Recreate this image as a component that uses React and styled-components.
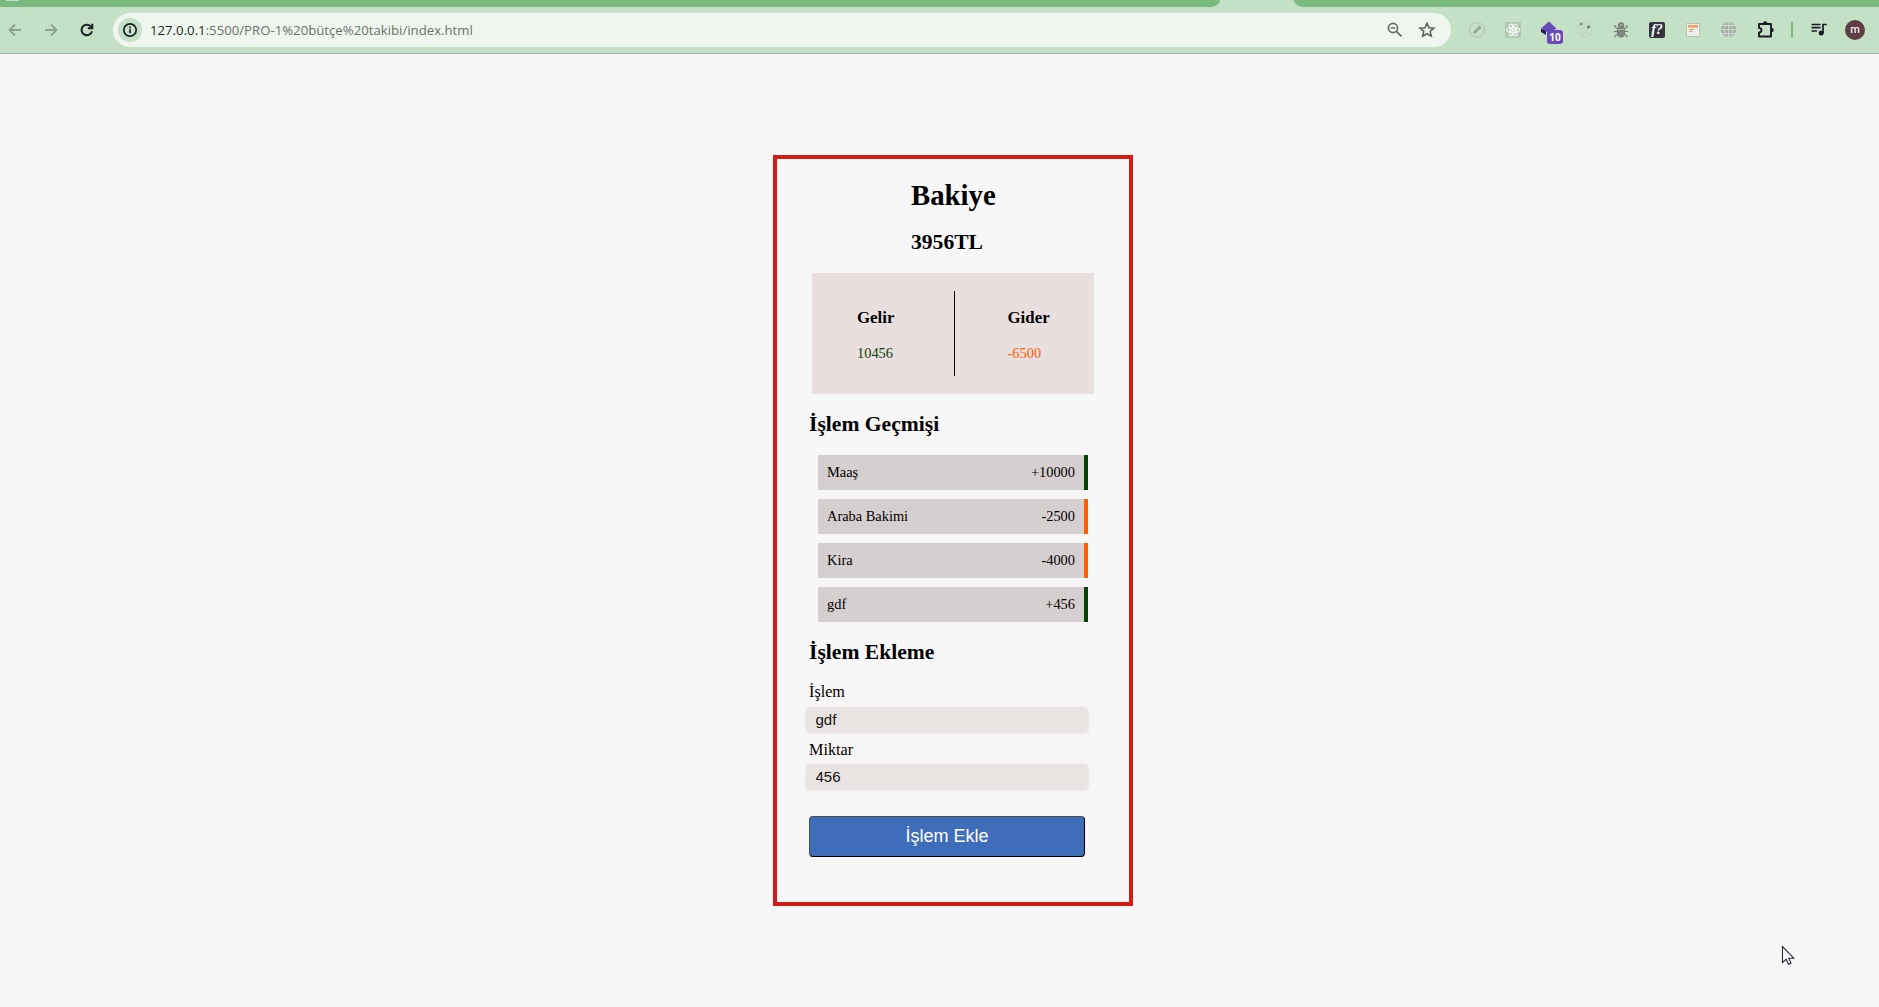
import React, { useState } from 'react';
import styled, { createGlobalStyle } from 'styled-components';

const GlobalStyle = createGlobalStyle`
  * { box-sizing: border-box; }
  body {
    margin: 0;
    background: #f7f7f7;
    color: #000;
    font-family: "Liberation Serif", "Times New Roman", serif;
    font-size: 14.4px;
    overflow: hidden;
  }
  h1, h2, h3, p { margin: 0; }
`;

const Window = styled.div`
  display: flex;
  flex-direction: column;
  height: 1007px;
`;

const TabStrip = styled.div`
  display: flex;
  height: 7px;
  background: #c5e1c5;
`;

const StripSegment = styled.div`
  width: ${(p) => (p.$width ? `${p.$width}px` : 'auto')};
  flex: ${(p) => (p.$width ? 'none' : '1')};
  background: #7aba7e;
  border-radius: ${(p) => (p.$side === 'left' ? '0 0 10px 0 / 0 0 7px 0' : '0 0 0 10px / 0 0 0 7px')};
`;

const HiddenTabIcon = styled.div`
  width: 13px;
  height: 1px;
  margin-left: 6px;
  background: #c9dfca;
`;

const ActiveTab = styled.div`
  width: 74px;
`;

const Toolbar = styled.header`
  display: flex;
  align-items: center;
  height: 47px;
  padding: 0 14px 0 5px;
  background: #c5e1c5;
  border-bottom: 1px solid #9db39e;
`;

const NavButtons = styled.nav`
  display: flex;
  gap: 16px;
  width: 108px;
  align-items: center;
`;

const Svg = styled.svg`
  display: block;
  flex: none;
  width: ${(p) => p.$size || 20}px;
  height: ${(p) => p.$size || 20}px;
`;

const AddressBar = styled.div`
  display: flex;
  align-items: center;
  width: 1338px;
  height: 34px;
  padding: 0 14px 0 5px;
  border-radius: 17px;
  background: #eff6ef;
`;

const SiteInfo = styled.span`
  display: grid;
  place-items: center;
  width: 24px;
  height: 24px;
  border-radius: 50%;
  background: #c5e1c5;
`;

const Url = styled.span`
  flex: 1;
  margin-left: 8px;
  font-family: "Open Sans", "Noto Sans", sans-serif;
  font-size: 13.2px;
  line-height: 20px;
  color: #6b706b;
  white-space: nowrap;
`;

const UrlHost = styled.span`
  color: #1b1f23;
`;

const AddressActions = styled.div`
  display: flex;
  gap: 12px;
`;

const Extensions = styled.div`
  display: flex;
  align-items: center;
  gap: 16px;
  margin-left: 16px;
`;

const BadgeHolder = styled.span`
  position: relative;
`;

const Badge = styled.span`
  position: absolute;
  left: 8px;
  top: 10px;
  width: 16px;
  height: 14px;
  border-radius: 3px;
  background: #674bb8;
  color: #fff;
  font: 700 10px/14px "Open Sans", sans-serif;
  text-align: center;
`;

const FunctionIcon = styled.span`
  display: grid;
  place-items: center;
  width: 16px;
  height: 16px;
  margin: 0 2px;
  border-radius: 2px;
  background: #35333f;
  color: #fff;
  font: italic 700 14px/14px "Liberation Serif", serif;
`;

const Divider = styled.span`
  width: 2px;
  height: 16px;
  background: #7aba7e;
`;

const Profile = styled.span`
  display: grid;
  place-items: center;
  width: 20px;
  height: 20px;
  border-radius: 50%;
  background: #5d3c42;
  color: #f5eeee;
  font: 500 11px/18px Roboto, sans-serif;
`;

const Page = styled.main`
  flex: 1;
  padding-top: 101px;
  padding-left: 773px;
`;

const Card = styled.section`
  display: flex;
  flex-direction: column;
  width: 360px;
  height: 751px;
  padding: 19px 32px 0;
  border: 4px solid #d61b17;
`;

const Balance = styled.div`
  padding-left: 102px;
`;

const Title = styled.h1`
  font-size: 28.8px;
  line-height: 34px;
`;

const Heading = styled.h2`
  font-size: 21.6px;
  line-height: 24px;
  margin-top: ${(p) => p.$top || 0}px;
`;

const Summary = styled.div`
  display: flex;
  justify-content: space-between;
  width: 282px;
  height: 121px;
  margin: 19px 0 0 3px;
  padding: 18px 0;
  background: #e9dfde;
`;

const SummaryColumn = styled.div`
  width: ${(p) => p.$width}px;
  padding: 17px 0 0 ${(p) => p.$indent}px;
  border-right: ${(p) => (p.$divided ? '1px solid #000' : 'none')};
`;

const SummaryLabel = styled.h3`
  font-size: 16.85px;
  line-height: 20px;
`;

const SummaryValue = styled.p`
  margin-top: 16px;
  line-height: 18px;
  color: ${(p) => (p.$negative ? '#f95c06' : '#0a420a')};
`;

const History = styled.ul`
  display: flex;
  flex-direction: column;
  gap: 9px;
  width: 270px;
  margin: 19px 0 0 9px;
  padding: 0;
  list-style: none;
`;

const HistoryRow = styled.li`
  display: flex;
  justify-content: space-between;
  height: 35px;
  padding: 9px;
  line-height: 17px;
  background: #d6cfcf;
  border-right: 4px solid ${(p) => (p.$negative ? '#fb5f06' : '#064206')};
`;

const Form = styled.form`
  display: flex;
  flex-direction: column;
  margin-top: 18px;
`;

const Label = styled.label`
  height: ${(p) => p.$height}px;
  padding-top: ${(p) => p.$top}px;
  font-size: 16.2px;
  line-height: 19px;
`;

const Input = styled.input`
  width: 282px;
  height: 25px;
  margin: 0 0 0 -3px;
  padding: 0 9.5px;
  border: 0;
  border-radius: 4px;
  background: #e9e3e2;
  box-shadow: 0 1px 3px rgba(0, 0, 0, 0.12);
  color: #111;
  font: 15px "Liberation Sans", Arial, sans-serif;
  outline: none;
`;

const Submit = styled.button`
  width: 276px;
  height: 41px;
  margin-top: 27px;
  padding: 0;
  border: 1px solid;
  border-color: #4c4c4c #000 #000 #4c4c4c;
  border-radius: 4px;
  background: #3e6db9;
  color: #fff;
  font: 18px "Liberation Sans", Arial, sans-serif;
`;

const Pointer = styled.div`
  position: absolute;
  left: 1781px;
  top: 945px;
`;

const transactions = [
  { name: 'Maaş', amount: 10000 },
  { name: 'Araba Bakimi', amount: -2500 },
  { name: 'Kira', amount: -4000 },
  { name: 'gdf', amount: 456 },
];

const ArrowIcon = ({ flip }) => (
  <Svg viewBox="0 0 20 20" fill="none" stroke="#8ba58c" strokeWidth="1.8">
    <path d={flip ? 'M4 10h11M10 4.5l5.500 5.500-5.500 5.500' : 'M16 10H5M10 4.500L4.500 10l5.500 5.500'} />
  </Svg>
);

const ReloadIcon = () => (
  <Svg viewBox="0 0 20 20" fill="none" stroke="#1b1f26" strokeWidth="2">
    <path d="M15 11.200A5.300 5.300 0 1 1 13.600 6.200L15 7.600" />
    <path d="M15.300 3.800v4.500h-4.500" />
  </Svg>
);

const InfoIcon = () => (
  <Svg $size={16} viewBox="0 0 16 16" fill="none" stroke="#1b1f26" strokeWidth="1.700">
    <circle cx="8" cy="8" r="6.200" />
    <path d="M8 7.300v3.900M8 4.600v1.600" />
  </Svg>
);

const ZoomOutIcon = () => (
  <Svg viewBox="0 0 20 20" fill="none" stroke="#666b66" strokeWidth="1.700">
    <circle cx="8" cy="8" r="4.600" />
    <path d="M11.400 11.400l5 5M5.800 8h4.400" />
  </Svg>
);

const StarIcon = () => (
  <Svg viewBox="0 0 20 20" fill="none" stroke="#5e635f" strokeWidth="1.600">
    <path d="M10 3.200l2 4.500 4.900.5-3.700 3.200 1.100 4.800-4.300-2.500-4.300 2.500 1.100-4.800-3.700-3.200 4.900-.5z" />
  </Svg>
);

const PenCircleIcon = () => (
  <Svg viewBox="0 0 20 20" fill="none">
    <circle cx="10" cy="10" r="7.400" stroke="#aebfae" />
    <path d="M7 13l6.500-6.500" stroke="#98a698" strokeWidth="3" />
  </Svg>
);

const AtomIcon = () => (
  <Svg viewBox="0 0 20 20" fill="none" stroke="#f6faf6" strokeWidth="1.100">
    <path d="M2 2h16v16H2z" fill="#b0c8b1" stroke="none" />
    <ellipse cx="10" cy="10" rx="6.500" ry="2.500" />
    <ellipse cx="10" cy="10" rx="6.500" ry="2.500" transform="rotate(60 10 10)" />
    <ellipse cx="10" cy="10" rx="6.500" ry="2.500" transform="rotate(120 10 10)" />
    <circle cx="10" cy="10" r="1" fill="#f6faf6" />
  </Svg>
);

const DiamondIcon = () => (
  <Svg viewBox="0 0 20 20">
    <path d="M2 9l5 1v5l-5-3z" fill="#211c53" />
    <path d="M10 1.500L17.500 8.500 10 13 2 8.500z" fill="#674bb8" />
  </Svg>
);

const OrbitIcon = () => (
  <Svg viewBox="0 0 20 20" fill="none">
    <circle cx="10" cy="10" r="7" stroke="#b5c6b5" strokeDasharray="2 1" />
    <circle cx="10" cy="10" r="3" stroke="#b9cab9" strokeDasharray="2 1" />
    <circle cx="6" cy="4" r="1.600" fill="#7e957f" />
    <circle cx="13.500" cy="7" r="1.500" fill="#6d766e" />
  </Svg>
);

const BugIcon = () => (
  <Svg viewBox="0 0 20 20" fill="none" stroke="#777e76" strokeWidth="1.200">
    <path d="M7 9L4 7V5M13 9l3-2V5M6 11.500H3M14 11.500h3M7 14l-3 2v1.500M13 14l3 2v1.500" />
    <circle cx="10" cy="5.500" r="2.700" fill="#858d83" />
    <ellipse cx="10" cy="12" rx="3.700" ry="5" fill="#7e897c" />
    <path d="M7 9.500h6M8.500 5h3" stroke="#a9b8a7" />
  </Svg>
);

const DocumentIcon = () => (
  <Svg viewBox="0 0 20 20" fill="none">
    <path d="M3.500 3.500h13v13h-13z" fill="#f0eeea" stroke="#b9c2b6" />
    <path d="M5 6.300h10" stroke="#e7a366" strokeWidth="2.600" />
    <path d="M6 9.500h5M6 11.500h3.500" stroke="#dba06c" strokeWidth="1.200" />
  </Svg>
);

const GlobeIcon = () => (
  <Svg viewBox="0 0 20 20" fill="none">
    <circle cx="9.500" cy="9.500" r="7.700" fill="#a5aca5" />
    <path d="M9.500 2v16M2 9.500h16M3 5.500h14M3 13.500h14" stroke="#cadccb" />
    <ellipse cx="9.500" cy="9.500" rx="4" ry="7.700" stroke="#cadccb" />
  </Svg>
);

const PuzzleIcon = () => (
  <Svg viewBox="0 0 20 20">
    <path d="M4 4h12v12.500H4v-4q2.500-.2 2.500-2.300T4 8z" fill="none" stroke="#1a1b29" strokeWidth="1.900" strokeLinejoin="round" />
    <path d="M8 3.500a2.200 2.200 0 0 1 4.400 0zM16.500 7.800a2.200 2.200 0 0 1 0 4.400z" fill="#1a1b29" />
  </Svg>
);

const QueueIcon = () => (
  <Svg viewBox="0 0 20 20" fill="none" stroke="#1a1b29" strokeWidth="1.700">
    <path d="M2.500 4.500h9M2.500 7.700h9M2.500 11h5.500M14 13V4.500H17.800" />
    <circle cx="12.200" cy="13" r="2.500" fill="#1a1b29" stroke="none" />
  </Svg>
);

export default function App() {
  const [name, setName] = useState('gdf');
  const [amount, setAmount] = useState('456');

  return (
    <Window>
      <GlobalStyle />
      <TabStrip>
        <StripSegment $width={1220} $side="left"><HiddenTabIcon /></StripSegment>
        <ActiveTab />
        <StripSegment $side="right" />
      </TabStrip>
      <Toolbar>
        <NavButtons>
          <ArrowIcon />
          <ArrowIcon flip />
          <ReloadIcon />
        </NavButtons>
        <AddressBar>
          <SiteInfo><InfoIcon /></SiteInfo>
          <Url><UrlHost>127.0.0.1</UrlHost>:5500/PRO-1%20bütçe%20takibi/index.html</Url>
          <AddressActions>
            <ZoomOutIcon />
            <StarIcon />
          </AddressActions>
        </AddressBar>
        <Extensions>
          <PenCircleIcon />
          <AtomIcon />
          <BadgeHolder>
            <DiamondIcon />
            <Badge>10</Badge>
          </BadgeHolder>
          <OrbitIcon />
          <BugIcon />
          <FunctionIcon>f?</FunctionIcon>
          <DocumentIcon />
          <GlobeIcon />
          <PuzzleIcon />
          <Divider />
          <QueueIcon />
          <Profile>m</Profile>
        </Extensions>
      </Toolbar>
      <Page>
        <Card>
          <Balance>
            <Title>Bakiye</Title>
            <Heading $top={18}>3956TL</Heading>
          </Balance>
          <Summary>
            <SummaryColumn $width={143} $indent={45} $divided>
              <SummaryLabel>Gelir</SummaryLabel>
              <SummaryValue>10456</SummaryValue>
            </SummaryColumn>
            <SummaryColumn $width={139} $indent={52.5}>
              <SummaryLabel>Gider</SummaryLabel>
              <SummaryValue $negative>-6500</SummaryValue>
            </SummaryColumn>
          </Summary>
          <Heading $top={18}>İşlem Geçmişi</Heading>
          <History>
            {transactions.map((t) => (
              <HistoryRow key={t.name} $negative={t.amount < 0}>
                <span>{t.name}</span>
                <span>{t.amount > 0 ? `+${t.amount}` : t.amount}</span>
              </HistoryRow>
            ))}
          </History>
          <Heading $top={18}>İşlem Ekleme</Heading>
          <Form onSubmit={(e) => e.preventDefault()}>
            <Label htmlFor="name" $height={25} $top={1}>İşlem</Label>
            <Input id="name" value={name} onChange={(e) => setName(e.target.value)} />
            <Label htmlFor="amount" $height={32} $top={9}>Miktar</Label>
            <Input id="amount" value={amount} onChange={(e) => setAmount(e.target.value)} />
            <Submit>İşlem Ekle</Submit>
          </Form>
        </Card>
      </Page>
      <Pointer>
        <Svg $size={22} viewBox="0 0 22 22">
          <path d="M1.500 1.500v16l3.700-3.300 2.300 5 2.500-1.100-2.200-4.900h5z" fill="#fff" stroke="#222631" strokeWidth="1.100" />
        </Svg>
      </Pointer>
    </Window>
  );
}
